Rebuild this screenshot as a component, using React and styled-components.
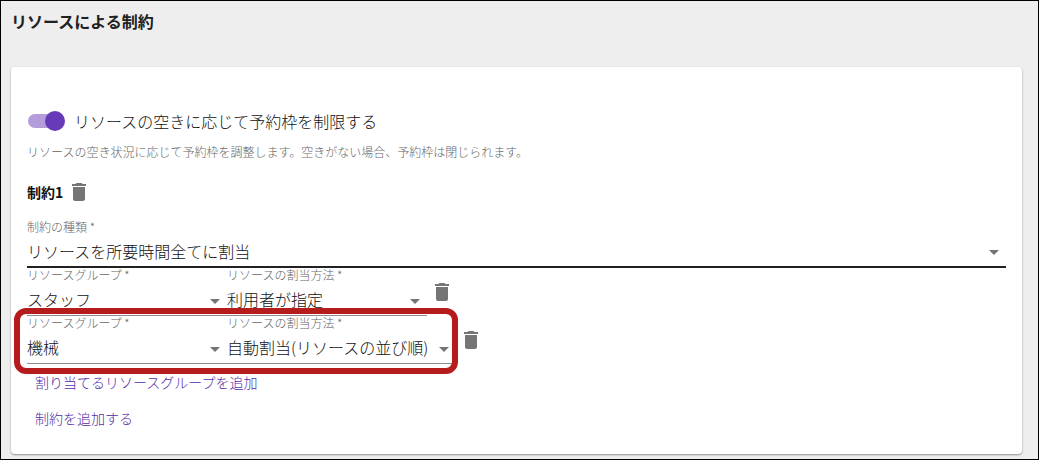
import React, { useId, useState } from "react";
import styled, { createGlobalStyle } from "styled-components";

const GlobalStyle = createGlobalStyle`
  *, *::before, *::after { box-sizing: border-box; }
  body {
    margin: 0;
    font-family: "Noto Sans CJK JP", "Noto Sans", sans-serif;
    font-weight: 300;
    color: #111111;
  }
  button, select, input { font: inherit; color: inherit; margin: 0; }
`;

const Page = styled.main`
  min-height: 100vh;
  padding: 7px 16px 5px 10px;
  background: #eeeeee;
  border: 1px solid #000;
`;

const PageTitle = styled.h1`
  margin: 0 0 33px;
  font-size: 16px;
  line-height: 26px;
  font-weight: 700;
  color: #212121;
`;

const Card = styled.section`
  padding: 40px 16px 18px;
  background: #fff;
  border-radius: 4px;
  box-shadow: 0 1px 2px rgba(0, 0, 0, 0.4);
`;

const ToggleLabel = styled.label`
  display: flex;
  align-items: center;
  gap: 10px;
  padding-left: 1px;
  font-size: 16px;
  line-height: 28px;
  cursor: pointer;
`;

const Switch = styled.input`
  appearance: none;
  position: relative;
  width: 36px;
  height: 14px;
  border-radius: 7px;
  background: ${(p) => (p.checked ? "#b39ddb" : "#9e9e9e")};
  cursor: pointer;

  &::before {
    content: "";
    position: absolute;
    top: -3px;
    left: ${(p) => (p.checked ? "17px" : "-1px")};
    width: 20px;
    height: 20px;
    border-radius: 50%;
    background: ${(p) => (p.checked ? "#673ab7" : "#fafafa")};
  }
`;

const Hint = styled.p`
  margin: 8px 0 19px;
  font-size: 12px;
  line-height: 18px;
  color: #666666;
`;

const RuleHeader = styled.div`
  display: flex;
  align-items: center;
  gap: 4px;
  margin-bottom: 16px;
`;

const RuleTitle = styled.h2`
  margin: 0;
  font-size: 14px;
  line-height: 24px;
  font-weight: 700;
`;

const IconButton = styled.button`
  display: flex;
  padding: 0;
  border: 0;
  background: none;
  color: #757575;
  cursor: pointer;
`;

const Field = styled.div`
  position: relative;
  display: flex;
  flex-direction: column;
  flex: none;
  width: ${(p) => p.$width || "100%"};
  height: 48px;
  border-bottom: ${(p) => (p.$active ? "2px solid #212121" : "1px solid #8c8c8c")};
`;

const FieldLabel = styled.label`
  font-size: 12px;
  line-height: 14px;
  color: #666666;
`;

const Select = styled.select`
  appearance: none;
  width: 100%;
  height: 33px;
  flex: none;
  padding: 0 20px 0 0;
  border: 0;
  border-radius: 0;
  background: none;
  font-size: 16px;
  line-height: 28px;
  outline: 0;
`;

const Arrow = styled.svg`
  position: absolute;
  right: 7px;
  bottom: 11px;
  fill: #757575;
  pointer-events: none;
`;

const GroupRow = styled.div`
  display: flex;
  align-items: center;
  gap: 3px;
`;

const Fields = styled.div`
  position: relative;
  display: flex;

  &::after {
    content: "";
    display: ${(p) => (p.$highlighted ? "block" : "none")};
    position: absolute;
    z-index: 1;
    inset: -8px -2px -10px -13px;
    border: 6px solid #b71c1c;
    border-radius: 12px;
    pointer-events: none;
  }
`;

const Actions = styled.div`
  display: flex;
  flex-direction: column;
  align-items: flex-start;
`;

const TextButton = styled.button`
  height: 36px;
  padding: 0 8px;
  border: 0;
  background: none;
  color: #512da8;
  font-size: 14px;
  line-height: 20px;
  cursor: pointer;
`;

function DeleteButton({ label }) {
  return (
    <IconButton type="button" aria-label={label}>
      <svg width="24" height="24" viewBox="0 0 24 24" fill="currentColor" aria-hidden="true">
        <path d="M6 19c0 1.1.9 2 2 2h8c1.1 0 2-.9 2-2V7H6v12zM19 4h-3.500l-1-1h-5l-1 1H5v2h14V4z" />
      </svg>
    </IconButton>
  );
}

function SelectField({ label, options, width, active }) {
  const id = useId();
  return (
    <Field $width={width} $active={active}>
      <FieldLabel htmlFor={id}>{label} *</FieldLabel>
      <Select id={id} required defaultValue={options[0]}>
        {options.map((option) => (
          <option key={option}>{option}</option>
        ))}
      </Select>
      <Arrow width="10" height="5" viewBox="0 0 10 5" aria-hidden="true">
        <path d="M0 0h10L5 5z" />
      </Arrow>
    </Field>
  );
}

const groups = [
  { group: "スタッフ", method: "利用者が指定", methodWidth: "200px" },
  { group: "機械", method: "自動割当(リソースの並び順)", methodWidth: "229px", highlighted: true },
];

export default function App() {
  const [limited, setLimited] = useState(true);
  return (
    <>
      <GlobalStyle />
      <Page>
        <PageTitle>リソースによる制約</PageTitle>
        <Card>
          <ToggleLabel>
            <Switch
              type="checkbox"
              role="switch"
              checked={limited}
              onChange={(e) => setLimited(e.target.checked)}
            />
            リソースの空きに応じて予約枠を制限する
          </ToggleLabel>
          <Hint>リソースの空き状況に応じて予約枠を調整します。空きがない場合、予約枠は閉じられます。</Hint>
          <RuleHeader>
            <RuleTitle>制約1</RuleTitle>
            <DeleteButton label="制約1を削除" />
          </RuleHeader>
          <SelectField label="制約の種類" options={["リソースを所要時間全てに割当"]} active />
          {groups.map((row) => (
            <GroupRow key={row.group}>
              <Fields $highlighted={row.highlighted}>
                <SelectField label="リソースグループ" options={[row.group]} width="200px" />
                <SelectField label="リソースの割当方法" options={[row.method]} width={row.methodWidth} />
              </Fields>
              <DeleteButton label={`${row.group}を削除`} />
            </GroupRow>
          ))}
          <Actions>
            <TextButton type="button">割り当てるリソースグループを追加</TextButton>
            <TextButton type="button">制約を追加する</TextButton>
          </Actions>
        </Card>
      </Page>
    </>
  );
}
